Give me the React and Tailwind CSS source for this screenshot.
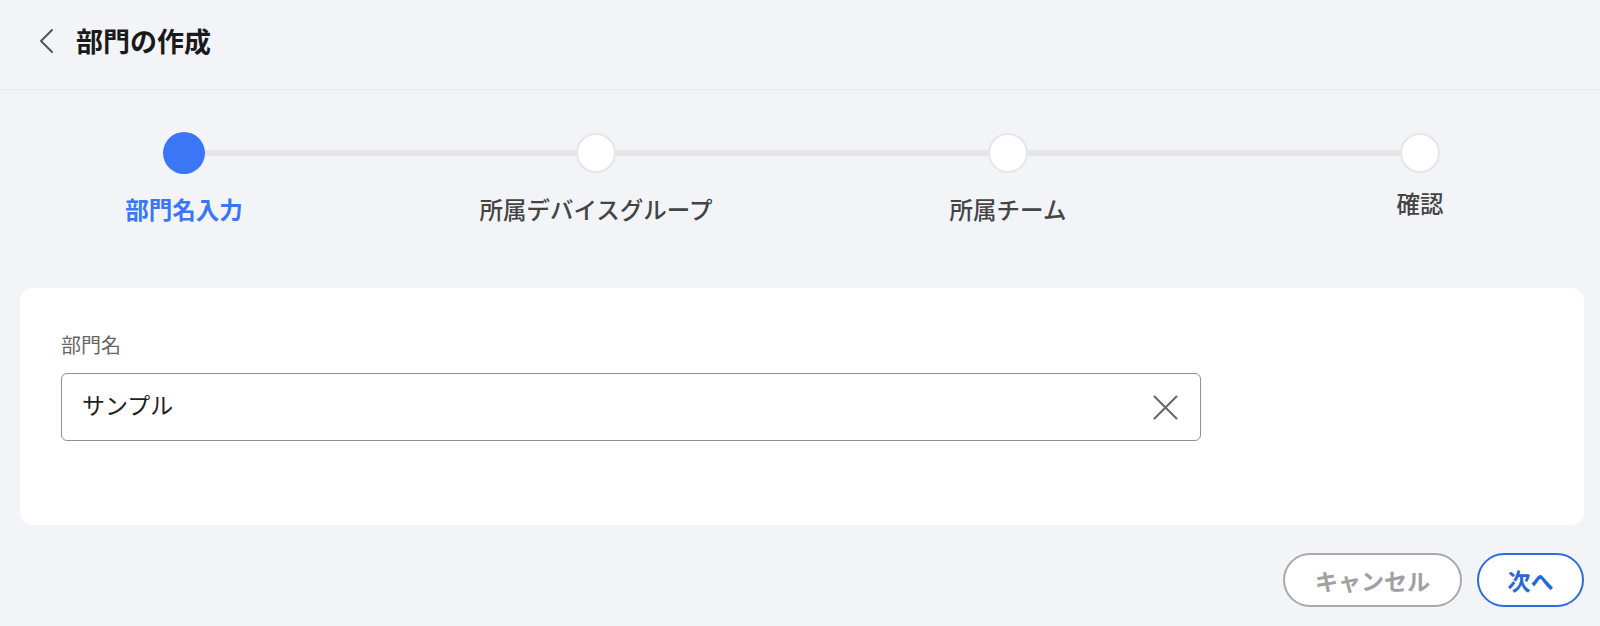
import { useState } from "react";

const steps = [
  { label: "部門名入力", active: true },
  { label: "所属デバイスグループ" },
  { label: "所属チーム" },
  { label: "確認", raised: true },
];

function StepDot({ active }) {
  return active ? (
    <span className="h-[42px] w-[42px] rounded-full bg-[#3a76f5]" />
  ) : (
    <span className="box-border h-[40px] w-[40px] rounded-full border-2 border-[#e6e6e8] bg-white" />
  );
}

export default function App() {
  const [name, setName] = useState("サンプル");

  return (
    <div className="min-h-[626px] bg-[#f3f4f8] font-['Noto_Sans_CJK_JP','Noto_Sans',sans-serif]">
      <header className="flex h-[90px] items-center border-b border-[#e8e9ee] pb-[8px] pl-[36px]">
        <button className="flex h-[30px] w-[20px] items-center justify-center text-[#555]" aria-label="戻る">
          <svg width="18" height="26" viewBox="0 0 18 26" fill="none">
            <path d="M15 2 L4 13 L15 24" stroke="currentColor" strokeWidth="2" strokeLinecap="round" strokeLinejoin="round" />
          </svg>
        </button>
        <h1 className="ml-[20px] text-[27px] font-bold leading-none text-[#1a1a1a]">部門の作成</h1>
      </header>

      <section className="pt-[42px]">
        <div className="relative mx-[64px] flex w-[1476px] justify-between">
          <div className="absolute left-[120px] right-[120px] top-[18px] h-[6px] bg-[#e6e6e8]" />
          {steps.map((step) => (
            <div key={step.label} className="relative flex w-[240px] flex-col items-center">
              <div className="flex h-[42px] items-center">
                <StepDot active={step.active} />
              </div>
              <p
                className={`${step.raised ? "mt-[13px]" : "mt-[19px]"} text-[23.5px] leading-[32px] ${
                  step.active ? "font-bold text-[#3a76f5]" : "font-medium text-[#444]"
                }`}
              >
                {step.label}
              </p>
            </div>
          ))}
        </div>
      </section>

      <main className="ml-5 mr-4 mt-[63px] h-[237px] rounded-[13px] bg-white px-[41px] pt-[43px]">
        <label className="block text-[20px] leading-[28px] text-[#666]">部門名</label>
        <div className="mt-[14px] flex h-[68px] w-[1140px] items-center rounded-[6px] border border-[#8f8f8f] pb-[5px] pl-[20px] pr-[22px]">
          <input
            value={name}
            onChange={(e) => setName(e.target.value)}
            className="flex-1 bg-transparent text-[23px] text-[#1f1f1f] outline-none"
          />
          <button onClick={() => setName("")} className="mt-[5px] text-[#666]" aria-label="クリア">
            <svg width="25" height="25" viewBox="0 0 25 25" fill="none">
              <path d="M1.5 1.5 L23.5 23.5 M23.5 1.5 L1.5 23.5" stroke="currentColor" strokeWidth="2" strokeLinecap="round" />
            </svg>
          </button>
        </div>
      </main>

      <footer className="mr-4 mt-[28px] flex justify-end gap-[15px]">
        <button className="h-[54px] w-[179px] rounded-full border-[2.5px] border-[#a9a9a9] bg-white text-[23px] font-bold text-[#a0a0a0]">
          キャンセル
        </button>
        <button className="h-[54px] w-[107px] rounded-full border-[2.5px] border-[#2d6be0] bg-white text-[23px] font-bold text-[#2566d8]">
          次へ
        </button>
      </footer>
    </div>
  );
}
